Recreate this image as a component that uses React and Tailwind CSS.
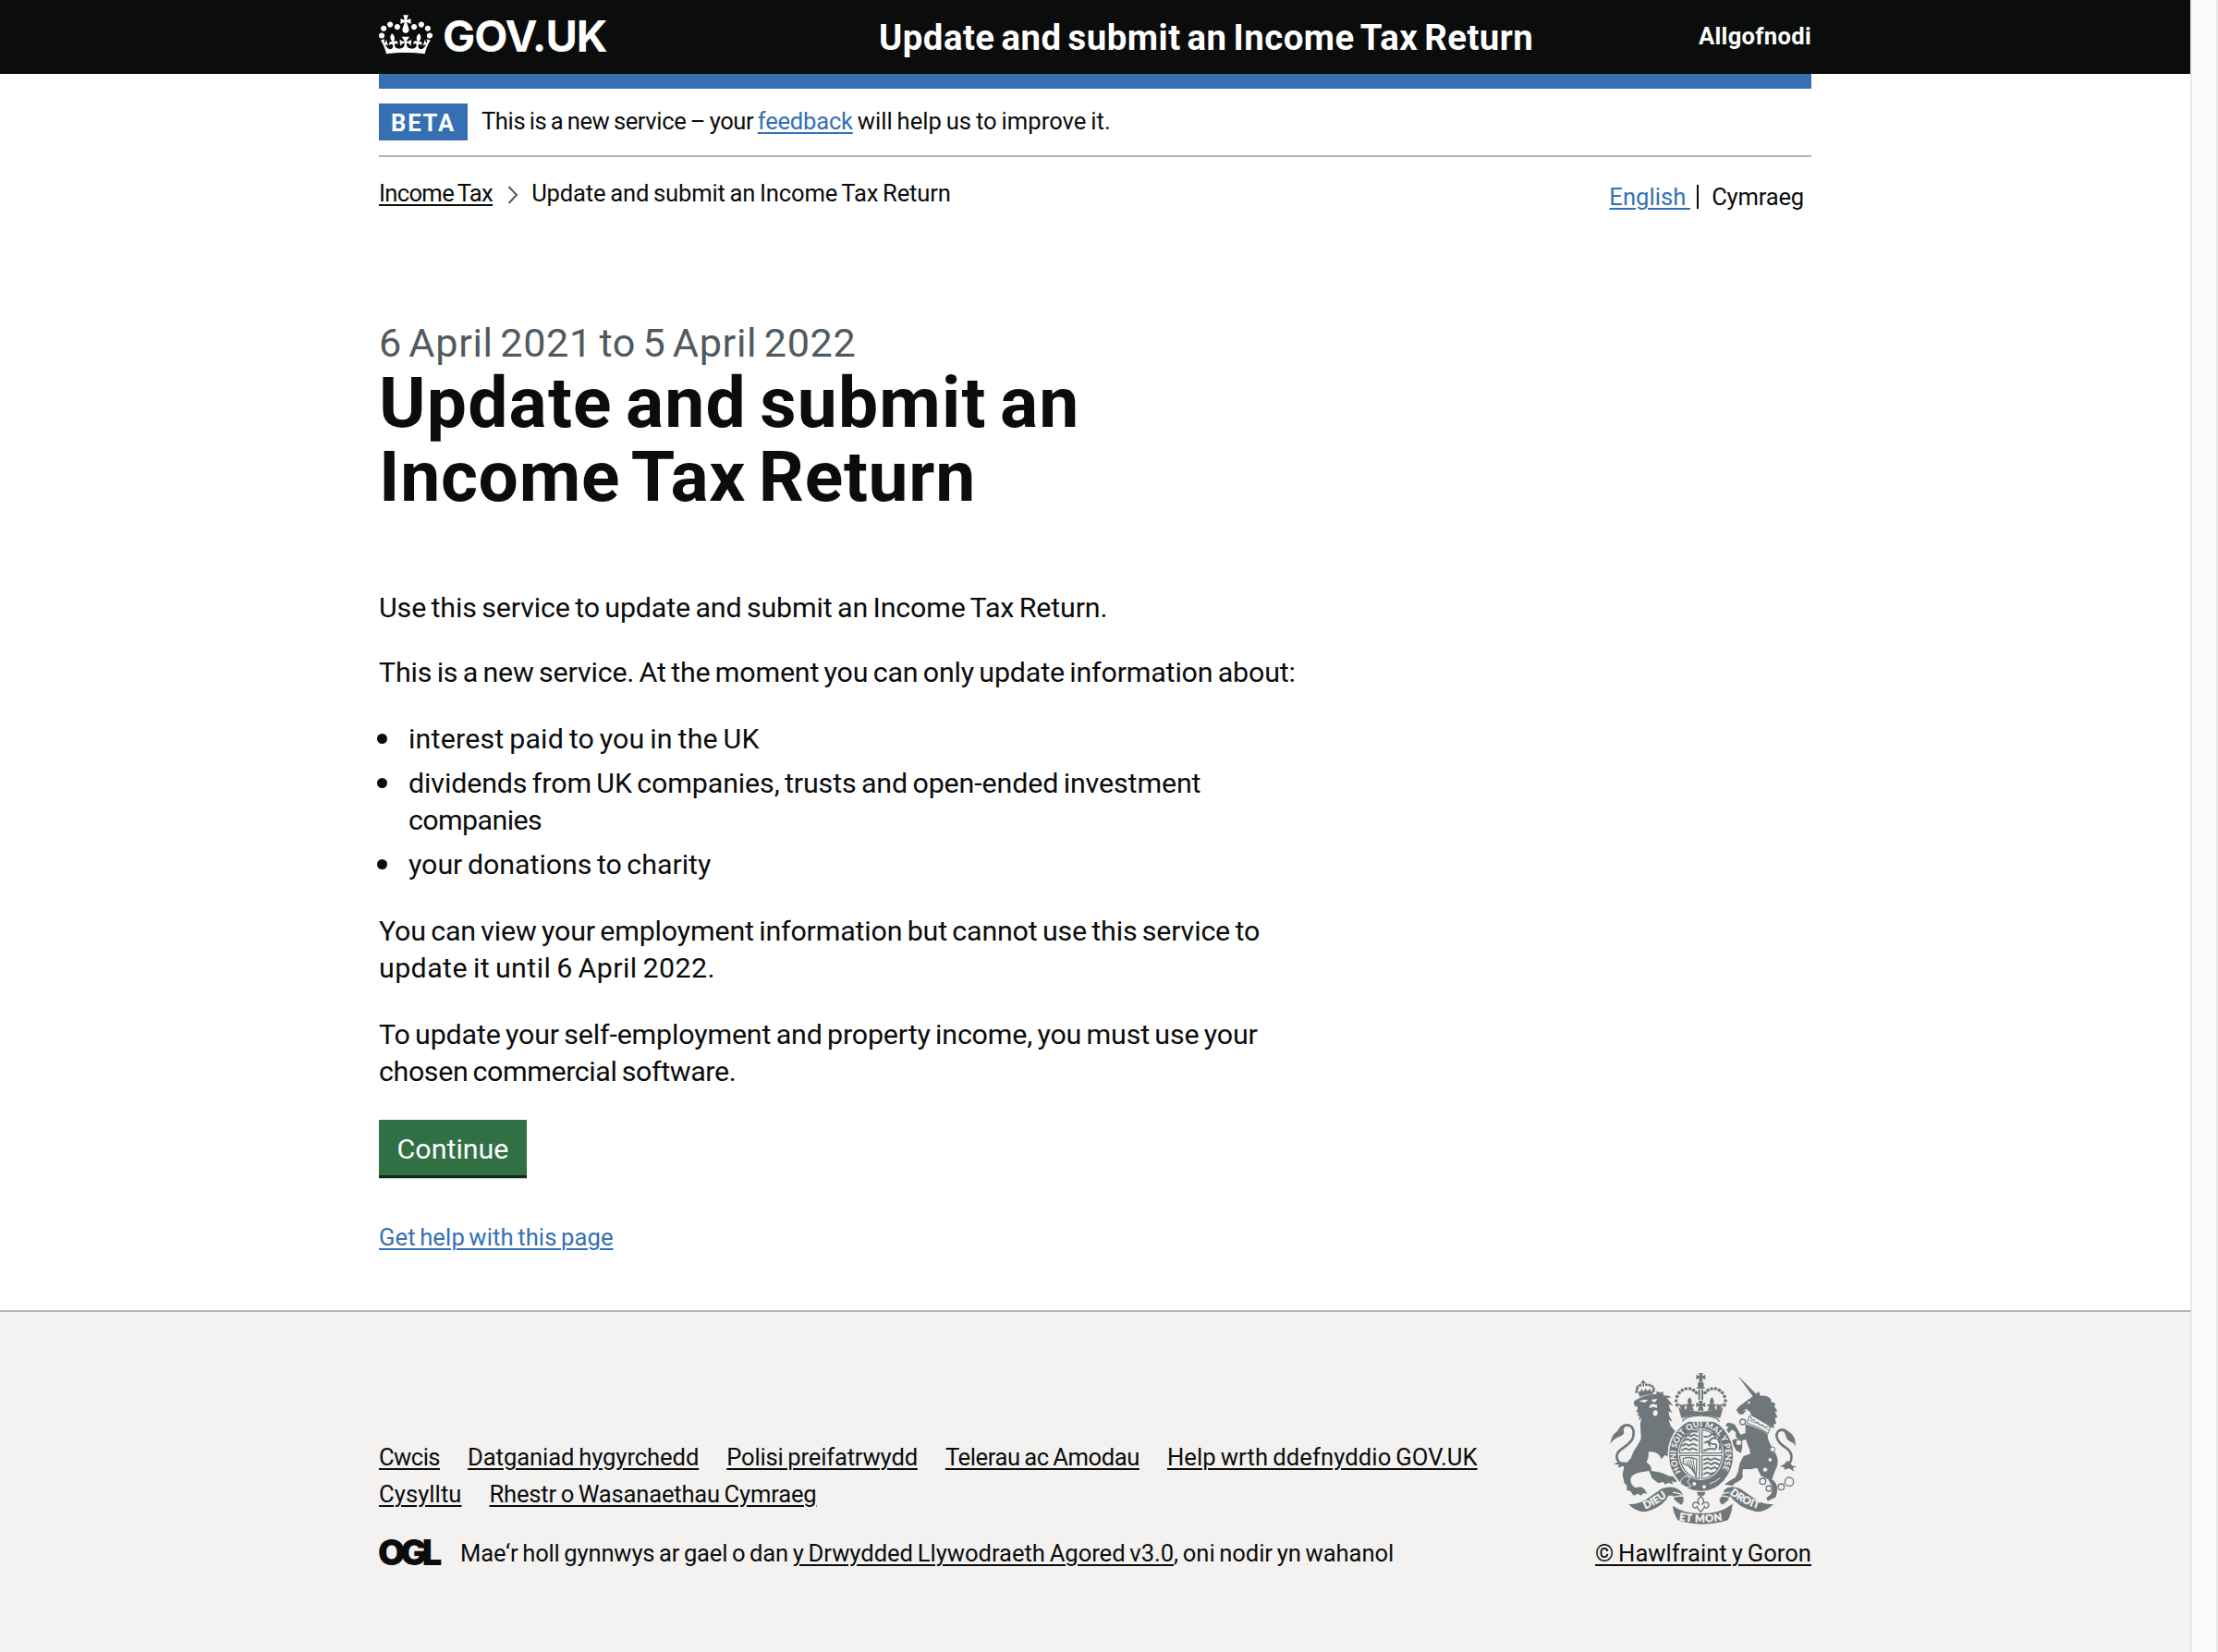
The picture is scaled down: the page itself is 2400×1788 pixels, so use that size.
const CROWN =
  'M25 30.2c3.5 1.5 7.7-.2 9.1-3.7 1.5-3.6-.2-7.8-3.9-9.2-3.6-1.4-7.6.3-9.1 3.9-1.4 3.5.3 7.5 3.9 9zM9 39.5c3.6 1.5 7.8-.2 9.2-3.7 1.5-3.6-.2-7.8-3.9-9.1-3.6-1.5-7.6.2-9.1 3.8-1.4 3.5.3 7.5 3.8 9zM4.4 57.2c3.5 1.5 7.7-.2 9.1-3.8 1.5-3.6-.2-7.7-3.9-9.1-3.5-1.5-7.6.3-9.1 3.8-1.4 3.5.3 7.6 3.9 9.1zm38.3-21.4c3.5 1.5 7.7-.2 9.1-3.8 1.5-3.6-.2-7.7-3.9-9.1-3.6-1.5-7.6.3-9.1 3.8-1.3 3.6.4 7.7 3.9 9.1zm64.4-5.6c-3.6 1.5-7.8-.2-9.1-3.7-1.5-3.6.2-7.8 3.8-9.2 3.6-1.4 7.7.3 9.2 3.9 1.3 3.5-.4 7.5-3.9 9zm15.9 9.3c-3.6 1.5-7.7-.2-9.1-3.7-1.5-3.6.2-7.8 3.7-9.1 3.6-1.5 7.7.2 9.2 3.8 1.5 3.5-.3 7.5-3.8 9zm4.7 17.7c-3.6 1.5-7.8-.2-9.2-3.8-1.5-3.6.2-7.7 3.9-9.1 3.6-1.5 7.7.3 9.2 3.8 1.3 3.5-.4 7.6-3.9 9.1zM89.3 35.8c-3.6 1.5-7.8-.2-9.2-3.8-1.4-3.6.2-7.7 3.9-9.1 3.6-1.5 7.7.3 9.2 3.8 1.4 3.6-.3 7.7-3.9 9.1zM69.7 17.7l8.9 4.7V9.3l-8.9 2.8c-.2-.3-.5-.6-.9-.9L72.4 0H59.6l3.5 11.2c-.3.3-.6.5-.9.9l-8.8-2.8v13.1l8.8-4.7c.3.3.6.7.9.9l-5 15.4v.1c-.2.8-.4 1.6-.4 2.4 0 4.1 3.1 7.5 7 8.1h.2c.3 0 .7.1 1 .1.4 0 .7 0 1-.1h.2c4-.6 7.1-4.1 7.1-8.1 0-.8-.1-1.7-.4-2.4V34l-5.1-15.4c.4-.2.7-.6 1-.9zM66 92.8c16.9 0 32.8 1.1 47.1 3.2 4-16.9 8.9-26.7 14-33.5l-9.6-3.4c1 4.9 1.1 7.2 0 10.2-1.5-1.4-3-4.3-4.2-8.7L108.6 76c2.8-2 5-3.2 7.5-3.3-4.4 9.4-10 11.9-13.6 11.2-4.3-.8-6.3-4.6-5.6-7.9 1-4.7 5.7-5.9 8-.5 4.3-8.7-3-11.4-7.6-8.8 7.1-7.2 7.9-13.5 2.1-21.1-8 6.1-8.1 12.3-4.5 20.8-4.7-5.4-12.1-2.5-9.5 6.2 3.4-5.2 7.9-2 7.2 3.1-.6 4.3-6.4 7.8-13.5 7.2-10.3-.9-10.9-8-11.2-13.8 2.5-.5 7.1 1.8 11 7.3L80.2 60c-4.1 4.4-8 5.3-12.3 5.4 1.4-4.4 8-11.6 8-11.6H55.5s6.4 7.2 7.9 11.6c-4.2-.1-8-1-12.3-5.4l1.4 16.4c3.9-5.5 8.5-7.7 10.9-7.3-.3 5.8-.9 12.8-11.1 13.8-7.2.6-12.9-2.9-13.5-7.2-.7-5 3.8-8.3 7.1-3.1 2.7-8.7-4.6-11.6-9.4-6.2 3.7-8.5 3.6-14.7-4.6-20.8-5.8 7.6-5 13.9 2.2 21.1-4.7-2.6-11.9.1-7.7 8.8 2.3-5.5 7.1-4.2 8.1.5.7 3.3-1.3 7.1-5.7 7.9-3.5.7-9-1.8-13.5-11.2 2.5.1 4.7 1.3 7.5 3.3l-4.7-15.4c-1.2 4.4-2.7 7.2-4.3 8.7-1.1-3-.9-5.3 0-10.2l-9.5 3.4c5 6.9 9.9 16.7 14 33.5 14.8-2.1 30.8-3.2 47.7-3.2z';

const ARCH_BEADS = [
  [314, 152], [311, 138], [314, 124], [321, 112], [331, 104], [343, 99], [356, 99], [368, 104], [377, 112],
];
const LION_CROWN_BEADS = [
  [184, 100], [182, 109], [186, 93], [194, 88], [214, 86], [224, 87], [233, 91], [238, 98], [238, 106],
];
const CHAIN = [
  [527, 207, 9], [514, 274, 10], [592, 400, 10], [612, 423, 9], [652, 418, 10], [678, 401, 14],
];
const CHAIN_ON_BODY = [[624, 296, 8], [616, 330, 7], [600, 362, 8]];

function RoyalArms() {
  const ink = '#6f777b';
  const paper = '#f3f2f1';
  return (
    <svg viewBox="96 48 606 492" className="h-[164px] w-[202px]" fill={ink} fontFamily="Lato, sans-serif" fontWeight="900">
      <defs>
        <path id="garter" d="M327 369A80 91 0 1 1 455 369" />
        <path id="dieu" d="M211 490Q256 472 300 434" />
        <path id="mon" d="M320 526Q391 539 470 525" />
        <path id="droit" d="M484 440Q526 476 596 494" />
      </defs>

      {/* Royal crown */}
      <path d="M384 48h14l-3 10 11-4v15l-11-4 3 10h-14l3-10-11 4V54l11 4z" />
      <circle cx="391" cy="86" r="10" />
      <path d="M378 94h26v5h-26zM383 101h6v34h-6zM393 101h6v34h-6z" />
      {ARCH_BEADS.map(([x, y]) => (
        <g key={`${x}-${y}`}>
          <circle cx={x} cy={y} r="5.6" />
          <circle cx={782 - x} cy={y} r="5.6" />
        </g>
      ))}
      <path d="M355 127c8 8 8 14 4 24 6-5 12-2 11 6-2-3-5-2-6 1l5 12h-28l5-12c-1-3-4-4-6-1-1-8 5-11 11-6-4-10-4-16 4-24zM427 127c8 8 8 14 4 24 6-5 12-2 11 6-2-3-5-2-6 1l5 12h-28l5-12c-1-3-4-4-6-1-1-8 5-11 11-6-4-10-4-16 4-24z" />
      <path d="M383 138h16l-4 10 11-4v15l-10-4 5 15h-20l5-15-10 4v-15l11 4zM318 147l12 5 8-4 2 22-8 4zM464 147l-12 5-8-4-2 22 8 4z" />
      <path d="M318 158l10 8Q391 180 454 166l10-8-10 36Q391 176 328 194z" />

      {/* Lion */}
      <circle cx="204" cy="76" r="4" />
      <path d="M202 72h5v20h-5zM196 78h16v4h-16z" />
      {LION_CROWN_BEADS.map(([x, y]) => (
        <circle key={`${x}-${y}`} cx={x} cy={y} r="4.500" />
      ))}
      <path d="M186 106l8 4 4-10 8 8 6-10 6 9 8-8 4 9 8-3-3 12q-22 0-42 9z" />
      <path d="M192 130q24-14 56-14l-2-8 16 4 6-5 2 14 18 1 7 6-14 0 10 14 10 12-14-4 4 14 8 14-12-6 2 16 10 18-12-6 6 20 20 22c-12 14-20 30-16 50l6 18 14 30-10-4 2 14-14-14-8 4-2-20-10-6-12 14c-6-18-18-26-42-24 2 14-2 24-6 34 14 10 18 18 14 28 20 2 42 6 56 16l16 2 12 14-4 6-12-6 4 12-14-6-12 6-6-8-16 4-20-16-10-24-24 4c-22 4-36 12-36 26 0 10 6 18 14 24l20-2 12 8 8 14-12-2-8 8-10-6-14 6-10-14-12-4 0-14-8-8-6-28 6-30 22-24c6-26 24-42 32-64 0-26-6-44 2-66l-10 8 4-16-8 4 4-14-8-2 6-12-6-8-4 4-4-16 8-6z" />
      <path d="M190 140q14-8 30-4l-10 8zM232 134l18-2-6 10-10 0zM226 152l10-4 14 4-2 10-10-4-14 4zM236 176q4-12 14-4 4 10-6 16-10-2-8-12z" fill={paper} />
      <path d="M158 352c-26-4-46-20-38-42 8-18 40-26 50-50 8-24 0-42-18-43-14 0-24 10-30 26" fill="none" stroke={ink} strokeWidth="8" />
      <path d="M96 280c4-8 2-16 8-26 8-14 24-18 26-28 4-8 14-12 22-8-10 6-14 12-10 22-2 12-14 14-22 18-10 4-18 12-24 22zM124 336l-16 8 18 2-4 10 16-6 24 4 4-14z" />

      {/* Unicorn */}
      <path d="M513 59l4 3 54 54-8 12z" />
      <path d="M560 124l20-16 4 14q24-2 36 12l-2 6 16 8-4 8 10 16-8 2 8 18-8 2 4 20-8 0 0 14-74-42q-2-16-14-18l-12 14-12 0-10-14 10-12z" />
      <path d="M541 143l12-3-6 10zM526 170l14-6 2 4z" fill={paper} />
      <path d="M550 186l8 16 4-4 10 14 4-6 8 14 6-6 8 12 6-4 14 0-8 22q-34-24-70-34z" fill={paper} stroke={ink} strokeWidth="3" />
      <path d="M546 202q36 8 66 32" stroke={ink} strokeWidth="2" fill="none" />
      <path d="M536 214q44 12 72 32c-2 22 14 40 24 60 14 24 10 42 0 60l-10 28c16 10 20 26 16 44l-4 14-10 4-16 8-4-10 16-14 4-20-14-26-24-12-12-26q-24 6-46 4l-2 14q4 10-2 18-12 10-22 14l-8 8-26-4 14-10 22-14 8-18 6-28 12-22 22-8c-2-20-14-34-16-58z" />
      <path d="M474 212q12-6 28 4l18 32 20-6 6 20-22 6-18-10-2-18-12-8-10 12-8-12 8-8-10-4zM502 262l22 8 2 18-4 20-16-8-6-12-16-12-6-14 14 6z" />
      <path d="M670 352c24-22 18-48-4-62-28-18-36-42-22-54 14-8 26 0 34 14" fill="none" stroke={ink} strokeWidth="8" />
      <path d="M702 290c-6-10-2-20-8-32-6-14-20-22-36-26 0 6 6 8 8 18 4 16 12 20 22 24 6 4 8 8 14 16zM672 332l18 18 14 2-14 4 4 12-16-10-16 4 0-8-14-2 14-8z" />
      {CHAIN.map(([x, y, r]) => (
        <circle key={x} cx={x} cy={y} r={r} fill={paper} stroke={ink} strokeWidth="4" />
      ))}
      {CHAIN_ON_BODY.map(([x, y, r]) => (
        <circle key={x} cx={x} cy={y} r={r} fill={paper} stroke={ink} strokeWidth="3" />
      ))}

      {/* Garter and shield */}
      <ellipse cx="392" cy="314" rx="106" ry="120" stroke={paper} strokeWidth="5" />
      <path d="M332 206c0-26 118-26 118 0" fill={paper} stroke={ink} strokeWidth="4" />
      <ellipse cx="391" cy="312" rx="74" ry="84" fill={paper} />
      <ellipse cx="391" cy="312" rx="69" ry="79" fill="none" stroke={ink} strokeWidth="4" />
      <g fill="none" stroke={ink} strokeWidth="6" strokeLinecap="round" strokeLinejoin="round">
        <path d="M340 254l10-6 8 6 10-6 12 5M336 268l12-6 10 6 10-7 12 6M332 284l10-6 10 6 14-6 12 6M330 298l12-5 12 5 10-6 14 6M352 240l14-3 12 2" />
        <path d="M402 254q14 4 24-6t14 12q-14-2-20 8t20 12q6 8-4 16-14-6-34 4M404 274l10-4 6 14M448 262l6 18-2 16" />
        <path d="M402 330l12-5 8 6 14-6 16 6M402 344l12-5 10 6 12-6 14 6M402 360l12-6 10 6 12-6 8 5M402 376l10-5 10 5 10-4" />
      </g>
      <g fill="none" stroke={ink} strokeWidth="4">
        <path d="M334 326q20-8 44 2l-2 58q-8-34-42-44z" />
        <path d="M342 332l16 26M350 330l16 40M358 328l12 48M366 328l6 44" strokeWidth="3" />
      </g>
      <path d="M391 236v152M322 312h138" stroke={ink} strokeWidth="12" />
      <path d="M391 232v160M318 312h146" stroke={paper} strokeWidth="4" />
      <text fill={paper} fontSize="27">
        <textPath href="#garter" textLength="374">HONI SOIT QUI MAL Y PENSE</textPath>
      </text>
      <path d="M330 392q12-16 26-4l-8 14 12 14q-18 8-28-6l-6 2v-14z" stroke={paper} strokeWidth="3" />
      <circle cx="370" cy="408" r="6" fill={paper} />
      <circle cx="402" cy="418" r="6" fill={paper} />
      <path d="M420 408q20-6 34-20" stroke={paper} strokeWidth="3" fill="none" />

      {/* Motto ribbon */}
      <path d="M156 474q34 2 58-16l50-34q36-14 60 6 14 14 10 38l-6 8q-30-18-26-30l-16 0q-16 36-72 52-30 4-58-24z" />
      <path d="M627 474q-34 2-58-16l-50-34q-32-14-50 2l-18 36 8 14q30-18 26-30l-2-2q30 42 86 54 30 4 58-24z" />
      <path d="M300 476q30 26 92 26t94-26l10-8q0 34-16 60-86 26-164 0-20-26-18-66z" stroke={paper} strokeWidth="4" />
      <path d="M300 436q24 0 32 12-26-4-38 12 0 14 18 22" fill="none" stroke={paper} strokeWidth="4" />
      <path d="M484 436q-24 0-32 12 26-4 38 12 0 14-18 22" fill="none" stroke={paper} strokeWidth="4" />
      <g fill={paper} fontSize="34" stroke={paper} strokeWidth="1">
        <text><textPath href="#dieu">DIEU</textPath></text>
        <text><textPath href="#mon" textLength="142">ET MON</textPath></text>
        <text><textPath href="#droit">DROIT</textPath></text>
      </g>
      <path d="M378 434h28l-4 12h-20z" />
      <path d="M391 448c12 12 12 18 4 28 8-12 22-10 22 2 0 8-10 12-14 4-2 8-8 10-12 18-4-8-10-10-12-18-4 8-14 4-14-4 0-12 14-14 22-2-8-10-8-16 4-28z" fill={paper} stroke={ink} strokeWidth="4" />
    </svg>
  );
}

const TEXT = 'text-[25.6px] leading-[40px] whitespace-nowrap [word-spacing:-1.5px]';
const LINK = 'underline decoration-2 underline-offset-[3px]';

function Bullet() {
  return <i className="mt-[14px] mr-[23px] ml-[-2px] size-[11px] shrink-0 rounded-full bg-current" />;
}

export default function App() {
  return (
    <div className="flex h-[1788px] w-[2400px] overflow-hidden bg-white font-[Roboto,sans-serif] text-[#0b0c0c]">
      <div className="flex w-[2370px] flex-col">
        <header className="flex h-20 bg-[#0b0c0c] px-[410px] text-white">
          <a href="#" className="flex w-[541px] gap-[11px]">
            <svg viewBox="0 0 132 97" className="mt-4 h-[43px] w-[58px]" fill="currentColor">
              <path d={CROWN} />
            </svg>
            <span className="mt-[-1px] font-[Inter,sans-serif] text-[47px] leading-[80px] font-bold tracking-[-1.1px]">GOV.UK</span>
          </a>
          <a href="#" className="text-[38.4px] leading-[82px] font-bold tracking-[0.46px] whitespace-nowrap [word-spacing:-3px]">
            Update and submit an Income Tax Return
          </a>
          <a href="#" className="ml-auto text-[25.6px] leading-[78px] font-bold tracking-[0.3px]">Allgofnodi</a>
        </header>

        <div className="mx-[410px] h-4 bg-[#3670b3]" />

        <div className="mx-[410px] flex h-[74px] border-b-2 border-[#b1b4b6] pt-4">
          <strong className="h-10 w-24 bg-[#3670b3] pl-[13px] text-[25.6px] leading-[42px] tracking-[1.8px] text-white">BETA</strong>
          <p className={`${TEXT} ml-[15px] mt-[-1px] whitespace-pre`}>
            <span className="tracking-[-0.4px]">This is a new service – your </span>
            <a href="#" className={`${LINK} tracking-[-0.23px] text-[#3670b3]`}>feedback</a>
            <span className="tracking-[0.02px]"> will help us to improve it.</span>
          </p>
        </div>

        <div className="mx-[410px] flex justify-between">
          <nav className={`${TEXT} mt-[19px] flex`}>
            <a href="#" className={`${LINK} tracking-[-0.68px]`}>Income Tax</a>
            <svg viewBox="0 0 12 20" className="mt-[12px] ml-[16px] h-5 w-3" fill="none" stroke="#505a5f" strokeWidth="2">
              <path d="M1.5 1l8.500 9-8.500 9" />
            </svg>
            <span className="ml-[14px] tracking-[-0.15px]">Update and submit an Income Tax Return</span>
          </nav>
          <div className={`${TEXT} mt-[23px] mr-2 flex`}>
            <a href="#" className={`${LINK} whitespace-pre tracking-[0.02px] text-[#3670b3]`}>English </a>
            <span className="mt-[7px] ml-[7px] h-[26px] w-[2px] bg-[#0b0c0c]" />
            <span className="ml-[14px] tracking-[-0.2px]">Cymraeg</span>
          </div>
        </div>

        <main className="mx-[410px] h-[1185px] pt-[115px] text-[30.4px] leading-[40px] whitespace-nowrap [word-spacing:-2px]">
          <h1 className="text-[76.8px] leading-[80px] font-bold">
            <span className="block text-[43.2px] leading-[48px] font-normal tracking-[0.68px] text-[#505a5f] [word-spacing:-4px]">
              6 April 2021 to 5 April 2022
            </span>
            <span className="block tracking-[1.18px] [word-spacing:-6px]">Update and submit an</span>
            <span className="block tracking-[0.7px] [word-spacing:-6px]">Income Tax Return</span>
          </h1>
          <p className="mt-[82px] tracking-[-0.13px]">Use this service to update and submit an Income Tax Return.</p>
          <p className="mt-[30px] tracking-[-0.17px]">
            This is a new service. At the moment you can only update information about:
          </p>
          <ul className="mt-8 flex flex-col gap-2">
            <li className="flex">
              <Bullet />
              <span className="tracking-[0.18px]">interest paid to you in the UK</span>
            </li>
            <li className="flex">
              <Bullet />
              <div>
                <span className="block tracking-[-0.12px]">dividends from UK companies, trusts and open-ended investment</span>
                <span className="block tracking-[-0.6px]">companies</span>
              </div>
            </li>
            <li className="flex">
              <Bullet />
              <span className="tracking-[-0.04px]">your donations to charity</span>
            </li>
          </ul>
          <p className="mt-8">
            <span className="block tracking-[-0.17px]">You can view your employment information but cannot use this service to</span>
            <span className="block tracking-[0.4px]">update it until 6 April 2022.</span>
          </p>
          <p className="mt-8">
            <span className="block tracking-[-0.16px]">To update your self-employment and property income, you must use your</span>
            <span className="block tracking-[-0.38px]">chosen commercial software.</span>
          </p>
          <button className="mt-8 block h-[63px] w-40 border-b-[3px] border-[#0f2b19] bg-[#307044] pt-1 text-white shadow-[0_1px_0_#c4cac6]">
            Continue
          </button>
          <a href="#" className={`${LINK} mt-[44px] block w-fit text-[25.6px] tracking-[0.11px] text-[#3670b3]`}>
            Get help with this page
          </a>
        </main>

        <footer className="flex grow justify-between border-t-2 border-[#b1b4b6] bg-[#f3f2f1] px-[410px]">
          <div className={`${TEXT} mt-[137px]`}>
            <div className="flex gap-[30px]">
              <a href="#" className={`${LINK} tracking-[-0.54px]`}>Cwcis</a>
              <a href="#" className={`${LINK} tracking-[-0.08px]`}>Datganiad hygyrchedd</a>
              <a href="#" className={`${LINK} tracking-[-0.18px]`}>Polisi preifatrwydd</a>
              <a href="#" className={`${LINK} tracking-[-0.4px]`}>Telerau ac Amodau</a>
              <a href="#" className={`${LINK} tracking-[0.11px]`}>Help wrth ddefnyddio GOV.UK</a>
            </div>
            <div className="flex gap-[30px]">
              <a href="#" className={`${LINK} tracking-[0.06px]`}>Cysylltu</a>
              <a href="#" className={`${LINK} tracking-[-0.2px]`}>Rhestr o Wasanaethau Cymraeg</a>
            </div>
            <div className="mt-6 flex">
              <span className="-ml-px w-[89px] font-[Inter,sans-serif] text-[38px] leading-[38px] font-black tracking-[-5.2px]">OGL</span>
              <p className="whitespace-pre">
                <span className="tracking-[-0.18px]">Mae‘r holl gynnwys ar gael o dan </span>
                <a href="#" className={`${LINK} tracking-[-0.04px]`}>y Drwydded Llywodraeth Agored v3.0</a>
                <span className="tracking-[-0.08px]">, oni nodir yn wahanol</span>
              </p>
            </div>
          </div>
          <div className="mt-[66px] flex flex-col items-end">
            <div className="mr-4"><RoyalArms /></div>
            <a href="#" className={`${TEXT} ${LINK} mt-[11px] tracking-[0.03px]`}>© Hawlfraint y Goron</a>
          </div>
        </footer>
      </div>
      <div className="w-[30px] border-x-2 border-[#e8e8e8] bg-[#fafafa]" />
    </div>
  );
}
